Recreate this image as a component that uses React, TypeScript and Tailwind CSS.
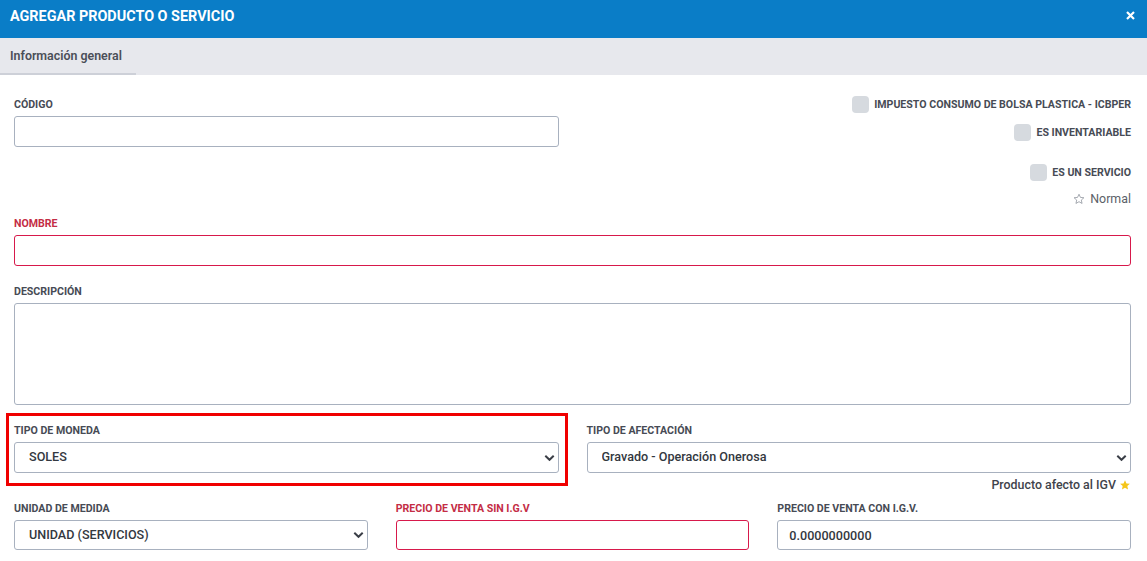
import React from "react";

const font = { fontFamily: "Roboto, 'Liberation Sans', sans-serif" };

const Label = ({ text, red }: { text: string; red?: boolean }) => (
    <div
        className={`text-[10.6px] leading-[13px] font-bold uppercase mb-[5px] ${
            red ? "text-[#c42d45]" : "text-[#474b55]"
        }`}
    >
        {text}
    </div>
);

const Chevron = () => (
    <svg
        className="pointer-events-none absolute right-[4px] top-1/2 -translate-y-1/2"
        width="11"
        height="7"
        viewBox="0 0 11 7"
    >
        <path d="M1.3 1.3 5.5 5.3 9.7 1.3" fill="none" stroke="#3b3f47" strokeWidth="2" />
    </svg>
);

const Select = ({ value, h = "h-[31px]" }: { value: string; h?: string }) => (
    <div className="relative">
        <select
            defaultValue={value}
            className={`w-full ${h} appearance-none rounded-[3px] border border-[#a8b1bf] bg-white pl-[14px] text-[12.6px] font-medium text-[#333840] outline-none`}
        >
            <option>{value}</option>
        </select>
        <Chevron />
    </div>
);

const Check = ({ text }: { text: string }) => (
    <div className="flex items-center gap-[5px]">
        <span className="h-[17px] w-[17px] rounded-[4px] bg-[#d6dadf]" />
        <span className="text-[10.6px] font-bold text-[#474b55]">{text}</span>
    </div>
);

const Star = ({ filled }: { filled?: boolean }) => (
    <svg width="12" height="12" viewBox="0 0 24 24">
        <path
            d="M12 2.5l2.9 6.3 6.9.7-5.2 4.6 1.5 6.8L12 17.4l-6.1 3.5 1.5-6.8L2.2 9.5l6.9-.7z"
            fill={filled ? "#f5c518" : "none"}
            stroke={filled ? "none" : "#8a8f98"}
            strokeWidth="1.5"
            strokeLinejoin="round"
        />
    </svg>
);

const App = () => {
    return (
        <div className="min-h-[561px] w-full bg-white" style={font}>
            <div className="flex h-[38px] items-center justify-between bg-[#0a7dc7] pb-[4px] pl-[10px] pr-[12px]">
                <h1 className="text-[14.4px] font-bold text-white">AGREGAR PRODUCTO O SERVICIO</h1>
                <svg width="9" height="9" viewBox="0 0 9 9" className="-mt-[4px]">
                    <path d="M1 1 8 8M8 1 1 8" stroke="white" strokeWidth="2.2" />
                </svg>
            </div>
            <div className="flex h-[37px] bg-[#e7e8ed]">
                <div className="flex w-[136px] items-center border-b-2 border-[#cdd0d8] pl-[10px] pt-[2px] text-[12.4px] font-semibold text-[#4b4f58]">
                    Información general
                </div>
            </div>

            <div className="pl-[14px] pr-[16px] pt-[21px]">
                <div className="grid grid-cols-2 gap-x-[28px]">
                    <div className="pt-[2px]">
                        <Label text="Código" />
                        <input className="h-[31px] w-full rounded-[3px] border border-[#a8b1bf] outline-none" />
                    </div>
                    <div className="flex flex-col items-end">
                        <Check text="IMPUESTO CONSUMO DE BOLSA PLASTICA - ICBPER" />
                        <div className="mt-[11px]">
                            <Check text="ES INVENTARIABLE" />
                        </div>
                        <div className="mt-[23px]">
                            <Check text="ES UN SERVICIO" />
                        </div>
                        <div className="mt-[11px] flex h-[14px] items-center gap-[5px] text-[12.4px] text-[#5b5f68]">
                            <Star />
                            Normal
                        </div>
                    </div>
                </div>

                <div className="mt-[11px]">
                    <Label text="Nombre" red />
                    <input className="h-[31px] w-full rounded-[3px] border border-[#d7194b] outline-none" />
                </div>

                <div className="mt-[19px]">
                    <Label text="Descripción" />
                    <textarea className="mt-[1px] block h-[102px] w-full resize-none rounded-[3px] border border-[#a8b1bf] outline-none" />
                </div>

                <div className="mt-[19px] grid grid-cols-2 gap-x-[28px]">
                    <div className="relative self-start">
                        <div className="pointer-events-none absolute -left-[8px] -right-[9px] -top-[11px] bottom-[-13px] border-[3px] border-[#f00000]" />
                        <Label text="Tipo de moneda" />
                        <Select value="SOLES" />
                    </div>
                    <div>
                        <Label text="Tipo de afectación" />
                        <Select value="Gravado - Operación Onerosa" />
                        <div className="mt-[5px] flex h-[14px] items-center justify-end gap-[3px] text-[12.4px] font-medium text-[#3f434b]">
                            Producto afecto al IGV
                            <Star filled />
                        </div>
                    </div>
                </div>

                <div className="mt-[10px] grid grid-cols-3 gap-x-[28px]">
                    <div>
                        <div className="mb-[1px]">
                            <Label text="Unidad de medida" />
                        </div>
                        <Select value="UNIDAD (SERVICIOS)" h="h-[30px]" />
                    </div>
                    <div>
                        <div className="mb-[1px]">
                            <Label text="Precio de venta sin I.G.V" red />
                        </div>
                        <input className="h-[30px] w-full rounded-[3px] border border-[#d7194b] outline-none" />
                    </div>
                    <div>
                        <div className="mb-[1px]">
                            <Label text="Precio de venta con I.G.V." />
                        </div>
                        <input
                            defaultValue="0.0000000000"
                            className="h-[30px] w-full rounded-[3px] border border-[#a8b1bf] pl-[11px] text-[12.6px] font-medium text-[#333840] outline-none"
                        />
                    </div>
                </div>
            </div>
        </div>
    );
};

export default App;
